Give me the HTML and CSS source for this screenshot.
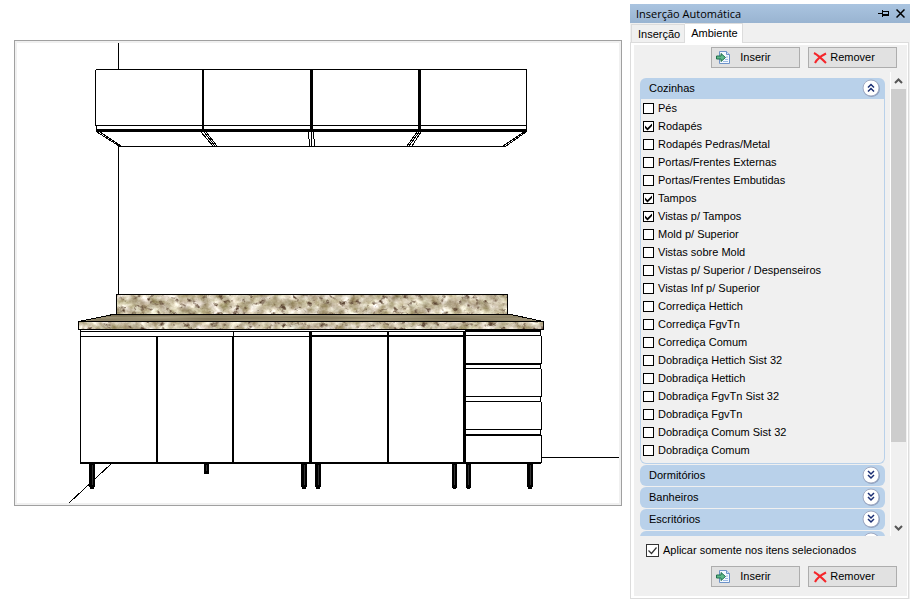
FILE: index.html
```html
<!DOCTYPE html>
<html lang="pt-BR">
<head>
  <meta charset="UTF-8"/>
  <title>Inserção Automática</title>
  <meta name="viewport" content="width=device-width,initial-scale=1"/>
  <link rel="stylesheet" href="styles.css">
</head>
<body>

<!-- Shared icons -->
<svg class="sprite" aria-hidden="true">
  <symbol id="ic-insert" viewBox="0 0 14 13">
    <path d="M3.500 .5h7l3 3v9h-10z" fill="#f4f9ff" stroke="#6d93c8"/>
    <path d="M10.500 .5v3h3" fill="#cfe0f5" stroke="#6d93c8"/>
    <path d="M10 6h2M9 8.500h3M7 10.500h5" stroke="#9dbbe6"/>
    <path d="M.5 5h4.500V2.500L9.500 6.500 5 10.500V8H.5z" fill="#5fb98a" stroke="#1f6f4c"/>
  </symbol>
  <symbol id="ic-remove" viewBox="0 0 14 13">
    <path d="M1 2C4 3.500 9 8 13 12M13 2.500C9 4.500 4 8 2 12" fill="none" stroke="#f5262b" stroke-width="2"/>
  </symbol>
  <symbol id="ic-down" viewBox="0 0 18 18">
    <circle cx="9.500" cy="9.500" r="8.500" fill="#7384a8" opacity=".7"/>
    <circle cx="9" cy="9" r="8" fill="#fff" stroke="#a2acc4"/>
    <path d="M6 5l3 3 3-3M6 9l3 3 3-3" fill="none" stroke="#1c2f74" stroke-width="1.500"/>
  </symbol>
  <symbol id="ic-up" viewBox="0 0 18 18">
    <circle cx="9.500" cy="9.500" r="8.500" fill="#7384a8" opacity=".7"/>
    <circle cx="9" cy="9" r="8" fill="#fff" stroke="#a2acc4"/>
    <path d="M6 8.500l3-3 3 3M6 12.500l3-3 3 3" fill="none" stroke="#1c2f74" stroke-width="1.500"/>
  </symbol>
</svg>

<main class="app">

  <!-- Kitchen view -->
  <section class="viewport">
    <svg viewBox="17 43 602 460" role="img" aria-label="Cozinha">
      <defs>
        <filter id="granite" x="0" y="0" width="100%" height="100%" color-interpolation-filters="sRGB">
          <feTurbulence type="fractalNoise" baseFrequency=".1 .12" numOctaves="4" seed="8"/>
          <feColorMatrix values=".7 0 0 0 .45  .75 .05 0 0 .36  .9 0 .1 0 .16  0 0 0 0 1"/>
        </filter>
        <filter id="speck" x="0" y="0" width="100%" height="100%" color-interpolation-filters="sRGB">
          <feTurbulence type="fractalNoise" baseFrequency=".15 .18" numOctaves="4" seed="21"/>
          <feColorMatrix values="0 0 0 0 .36  0 0 0 0 .27  0 0 0 0 .2  4 0 0 0 -2.300"/>
        </filter>
        <filter id="grain" x="0" y="0" width="100%" height="100%" color-interpolation-filters="sRGB">
          <feTurbulence type="fractalNoise" baseFrequency=".012 .3" numOctaves="2" seed="5"/>
          <feColorMatrix values=".3 0 0 0 .42  .3 0 0 0 .38  .3 0 0 0 .27  0 0 0 0 1"/>
        </filter>
        <clipPath id="slab"><path d="M113 314H510L543 322H79z"/></clipPath>
      </defs>

      <!-- walls and floor -->
      <g class="ink">
        <path d="M118.500 43V69M118.500 146V294M542 457.500H619"/>
      </g>
      <path class="thin" d="M111 464L69 503"/>

      <!-- upper cabinets -->
      <g class="ink">
        <path d="M96 69.500H527M95.500 70V126M96.500 125V132M526.500 69V132M96 125.500H527M118 146.500H506"/>
        <path d="M96 130.500H527" stroke-width="3"/>
        <path d="M203 69V132" stroke-width="2"/>
        <path d="M311.500 69V132M419.500 69V130" stroke-width="3"/>
      </g>
      <path class="thin" d="M97 132L119 146M100 132L121 146M201 132L213 146M204 132L215 146M206 132L217 146M308.500 132L309.500 146M311.500 132V146M313.500 132L314.500 146M417 132L407 146M419 132L409 146M421 132L412 146M524 132L503 146M526 132L506 146"/>

      <!-- countertop -->
      <rect x="116" y="294" width="392" height="21" filter="url(#granite)"/>
      <rect x="116" y="294" width="392" height="21" filter="url(#speck)"/>
      <g clip-path="url(#slab)"><rect x="78" y="314" width="466" height="8" filter="url(#grain)"/></g>
      <rect x="78" y="321" width="466" height="9" filter="url(#granite)"/>
      <rect x="78" y="321" width="466" height="9" filter="url(#speck)"/>
      <g class="ink">
        <path d="M116.500 315V294.500H507.500V315M113 314.500H511M78.500 321.500H543.500V329.500H78.500z"/>
        <path d="M79 321.500L113 314.500M511 314.500L543 321.500"/>
      </g>

      <!-- base cabinets -->
      <g class="ink">
        <path d="M80.500 330V463M80 331.500H541M80 336.500H310M465 335.500H541M540.500 331V336M541.500 336V364M540.500 364V369M541.500 369V397M540.500 397V402M541.500 402V430M540.500 430V435M541.500 435V463"/>
        <path d="M465 368.500H541M465 396.500H541M465 401.500H541M465 429.500H541M233.500 331V336"/>
        <path d="M157 336V463M233 336V463M388 332V463M311 336H464M80 463H541M465 364H541M465 435H541M465 331H541" stroke-width="2"/>
        <path d="M310.500 331V463M464.500 331V463" stroke-width="3"/>
      </g>

      <!-- feet -->
      <g class="feet">
        <path d="M89 464h6v23h-1v2h-4v-2h-1zM204 464h5v10h-5zM301 464h6v23h-1v2h-4v-2h-1zM315 464h6v23h-1v2h-4v-2h-1zM452 464h5v24h-1v1h-3v-1h-1zM466 464h5v24h-1v1h-3v-1h-1zM527 464h6v23h-1v2h-4v-2h-1z"/>
        <path class="shine" d="M92.500 465V485M206.500 465V471M304.500 465V485M318.500 465V485M454.500 465V485M468.500 465V485M530.500 465V485"/>
      </g>
    </svg>
  </section>

  <!-- Docked panel -->
  <aside class="panel">
    <header class="titlebar">
      <h1>Inserção Automática</h1>
      <button class="tool" title="Fixar">
        <svg width="12" height="9" viewBox="0 0 12 9"><path d="M0 4.500H4M4.500 1V8M5 2.500H11M10.500 2V7" fill="none" stroke="#000"/><path d="M5 5h6v2H5z"/></svg>
      </button>
      <button class="tool" title="Fechar">
        <svg width="9" height="9" viewBox="0 0 9 9"><path d="M.5 .5l8 8M8.500 .5l-8 8" stroke="#000" stroke-width="1.500"/></svg>
      </button>
    </header>

    <nav class="tabs">
      <button class="tab">Inserção</button>
      <button class="tab selected">Ambiente</button>
    </nav>

    <div class="page">
      <div class="actions">
        <button class="btn"><svg><use href="#ic-insert"/></svg><span>Inserir</span></button>
        <button class="btn"><svg><use href="#ic-remove"/></svg><span>Remover</span></button>
      </div>

      <div class="scroller">
        <div class="groups">
          <section class="group open">
            <button class="group-head"><span>Cozinhas</span><svg><use href="#ic-up"/></svg></button>
            <div class="items">
              <label><input type="checkbox">Pés</label>
              <label><input type="checkbox" checked>Rodapés</label>
              <label><input type="checkbox">Rodapés Pedras/Metal</label>
              <label><input type="checkbox">Portas/Frentes Externas</label>
              <label><input type="checkbox">Portas/Frentes Embutidas</label>
              <label><input type="checkbox" checked>Tampos</label>
              <label><input type="checkbox" checked>Vistas p/ Tampos</label>
              <label><input type="checkbox">Mold p/ Superior</label>
              <label><input type="checkbox">Vistas sobre Mold</label>
              <label><input type="checkbox">Vistas p/ Superior / Despenseiros</label>
              <label><input type="checkbox">Vistas Inf p/ Superior</label>
              <label><input type="checkbox">Corrediça Hettich</label>
              <label><input type="checkbox">Corrediça FgvTn</label>
              <label><input type="checkbox">Corrediça Comum</label>
              <label><input type="checkbox">Dobradiça Hettich Sist 32</label>
              <label><input type="checkbox">Dobradiça Hettich</label>
              <label><input type="checkbox">Dobradiça FgvTn Sist 32</label>
              <label><input type="checkbox">Dobradiça FgvTn</label>
              <label><input type="checkbox">Dobradiça Comum Sist 32</label>
              <label><input type="checkbox">Dobradiça Comum</label>
            </div>
          </section>
          <button class="group-head"><span>Dormitórios</span><svg><use href="#ic-down"/></svg></button>
          <button class="group-head"><span>Banheiros</span><svg><use href="#ic-down"/></svg></button>
          <button class="group-head"><span>Escritórios</span><svg><use href="#ic-down"/></svg></button>
          <button class="group-head"><svg><use href="#ic-down"/></svg></button>
        </div>
        <div class="scrollbar">
          <button class="arrow"><svg width="9" height="6" viewBox="0 0 9 6"><path d="M1 5l3.500-3.500L8 5" fill="none" stroke="#555" stroke-width="2"/></svg></button>
          <div class="track"><div class="thumb"></div></div>
          <button class="arrow"><svg width="9" height="6" viewBox="0 0 9 6"><path d="M1 1l3.500 3.500L8 1" fill="none" stroke="#555" stroke-width="2"/></svg></button>
        </div>
      </div>

      <label class="apply"><input type="checkbox" checked>Aplicar somente nos itens selecionados</label>

      <div class="actions">
        <button class="btn"><svg><use href="#ic-insert"/></svg><span>Inserir</span></button>
        <button class="btn"><svg><use href="#ic-remove"/></svg><span>Remover</span></button>
      </div>
    </div>
  </aside>

</main>

</body>
</html>
```

FILE: styles.css
```css
* { box-sizing: border-box; }
body {
  margin: 0;
  background: #fff;
  color: #000;
  font: 11px/18px "Liberation Sans", Arial, sans-serif;
}
button {
  padding: 0;
  border: none;
  background: transparent;
  color: inherit;
  font: inherit;
}
.sprite { display: none; }

.app {
  display: flex;
  gap: 8px;
  height: 100vh;
  padding: 4px 14px 6px;
}

/* Kitchen view */
.viewport {
  flex: 1;
  align-self: flex-start;
  margin-top: 36px;
  padding: 2px;
  border: 1px solid #a0a0a0;
  background: #f0f0f0;
}
.viewport svg {
  display: block;
  width: 100%;
  background: #fff;
}
.ink { fill: none; stroke: #000; shape-rendering: crispEdges; }
.thin { fill: none; stroke: #000; stroke-width: 1; shape-rendering: crispEdges; }
.feet { fill: #000; shape-rendering: crispEdges; }
.shine { stroke: #333; }

/* Docked panel */
.panel {
  display: flex;
  flex-direction: column;
  width: 280px;
  background: #f0f0f0;
}
.titlebar {
  display: flex;
  align-items: center;
  gap: 6px;
  height: 19px;
  padding: 0 5px 0 6px;
  background: linear-gradient(#aac4e0, #99b4d1);
}
.titlebar h1 {
  flex: 1;
  margin: 0;
  font: 11px/18px "Open Sans", "Noto Sans", sans-serif;
}
.tool { display: flex; }

.tabs {
  position: relative;
  display: flex;
  align-items: flex-end;
  height: 20px;
  margin-bottom: -1px;
  padding-left: 1px;
}
.tab {
  height: 19px;
  padding: 0 4px 0 6px;
  border: 1px solid #dcdcdc;
}
.tab.selected {
  height: 20px;
  padding: 0 4px 2px 6px;
  border-bottom: none;
  border-left: none;
  background: #fff;
}

.page {
  display: flex;
  flex: 1;
  flex-direction: column;
  min-height: 0;
  margin-right: 1px;
  padding: 4px 11px 11px 9px;
  border: 1px solid #dcdcdc;
  box-shadow: inset 3px 2px #fff, inset -1px -2px #fff;
}
.actions {
  display: flex;
  justify-content: flex-end;
  gap: 8px;
}
.btn {
  display: flex;
  align-items: center;
  width: 89px;
  height: 21px;
  padding: 0 4px 1px;
  border: 1px solid #adadad;
  background: #e1e1e1;
}
.btn svg { width: 14px; height: 13px; }
.btn span { flex: 1; margin-right: 14px; }

.scroller {
  display: flex;
  flex: 1;
  min-height: 0;
  margin: 4px -10px 0 0;
}
.groups {
  flex: 1;
  padding-top: 6px;
  overflow: hidden;
}
.group-head {
  display: flex;
  align-items: center;
  justify-content: space-between;
  width: 100%;
  height: 21px;
  margin-bottom: 1px;
  padding: 0 5px 2px 9px;
  border-radius: 6px;
  background: #b9d1ea;
}
.group-head svg { width: 18px; height: 18px; margin-left: auto; }
.open .group-head {
  margin: 0;
  border-radius: 6px 6px 0 0;
}
.group { margin-bottom: 1px; }
.items {
  padding: 0 2px 4px;
  border: 1px solid #b9d1ea;
  border-top: none;
  border-radius: 0 0 6px 6px;
}
.items label {
  display: flex;
  align-items: center;
  gap: 4px;
  height: 18px;
}
input[type="checkbox"] {
  width: 11px;
  height: 11px;
  margin: 0;
  border: 1px solid #000;
  background: #fff;
  appearance: none;
}
input:checked {
  background: #fff url("data:image/svg+xml,%3Csvg xmlns='http://www.w3.org/2000/svg' viewBox='0 0 9 9'%3E%3Cpath d='M1 3.5v2.500l2.500 2.500L8 4V1.500L3.500 6z'/%3E%3C/svg%3E");
}

.scrollbar {
  display: flex;
  flex-direction: column;
  width: 17px;
  margin-left: 5px;
  padding-right: 1px;
  border-left: 1px solid #fff;
}
.arrow {
  display: flex;
  align-items: center;
  justify-content: center;
  height: 17px;
}
.track { flex: 1; }
.thumb {
  height: 82%;
  background: #cdcdcd;
}

.apply {
  display: flex;
  align-items: center;
  gap: 4px;
  height: 18px;
  margin: 5px 0 7px 6px;
}
.apply input[type="checkbox"] {
  width: 13px;
  height: 13px;
  border-color: #333;
}
.apply input:checked {
  background: #fff url("data:image/svg+xml,%3Csvg xmlns='http://www.w3.org/2000/svg' viewBox='0 0 11 11'%3E%3Cpath d='M1.500 5.500l3 3 5-6' fill='none' stroke='%23333' stroke-width='1.200'/%3E%3C/svg%3E");
}
```
